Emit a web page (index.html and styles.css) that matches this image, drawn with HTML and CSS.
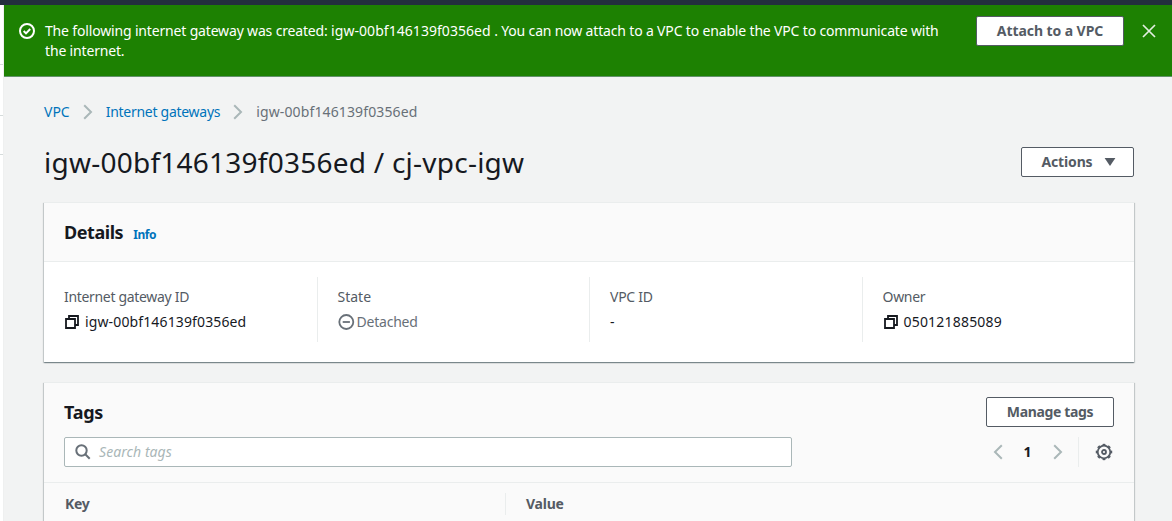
FILE: index.html
```html
<!DOCTYPE html>
<html lang="en">
<head>
<meta charset="utf-8">
<title>Internet gateway details</title>
<link rel="stylesheet" href="styles.css">
</head>
<body>
<div class="topbar"></div>
<div class="shell">
  <aside class="sidebar"><span class="side-a"></span><span class="side-b"></span><span class="side-c"></span></aside>
  <main class="main">
    <div class="flash">
      <svg class="flash-icon" width="16" height="16" viewBox="0 0 16 16"><circle cx="8" cy="8" r="7" /><path d="M4.700 8l2.300 2.400 4.200-4.400" /></svg>
      <p class="flash-text">The following internet gateway was created: <span class="flash-id">igw-00bf146139f0356ed</span> . You can now attach to a VPC to enable the VPC to communicate with<br>the internet.</p>
      <button class="btn btn-attach"><span class="t-attach">Attach to a VPC</span></button>
      <svg class="close" width="14" height="14" viewBox="0 0 14 14"><path d="M1 1l12 12M13 1L1 13" /></svg>
    </div>
    <div class="content">
      <nav class="crumbs">
        <a class="c-vpc">VPC</a>
        <svg class="chev" width="10" height="16" viewBox="0 0 10 16"><path d="M1.200 1.300L8 8l-6.800 6.700" /></svg>
        <a class="c-igw">Internet gateways</a>
        <svg class="chev" width="10" height="16" viewBox="0 0 10 16"><path d="M1.200 1.300L8 8l-6.800 6.700" /></svg>
        <span class="c-current">igw-00bf146139f0356ed</span>
      </nav>
      <header class="page-head">
        <h1>igw-00bf146139f0356ed / cj-vpc-igw</h1>
        <button class="btn btn-actions"><span class="t-actions">Actions</span><svg width="12" height="8" viewBox="0 0 12 8"><path d="M.6 0h10.800L6 8z" /></svg></button>
      </header>
      <section class="panel details">
        <div class="details-head"><h2 class="t-details">Details</h2><a class="info">Info</a></div>
        <div class="cols">
          <div class="col">
            <div class="label t-gid">Internet gateway ID</div>
            <div class="value"><svg class="copy" width="16" height="16" viewBox="0 0 16 16"><path d="M2 5h9v9H2zM5 5V2h9v9h-3" /></svg><span class="t-id">igw-00bf146139f0356ed</span></div>
          </div>
          <div class="col">
            <div class="label">State</div>
            <div class="value muted"><svg class="minus" width="17" height="16" viewBox="0 0 17 16"><circle cx="8.300" cy="8" r="7" /><path d="M4.700 8h7.200" /></svg><span class="t-det">Detached</span></div>
          </div>
          <div class="col">
            <div class="label t-vpcid">VPC ID</div>
            <div class="value"><span class="dash">-</span></div>
          </div>
          <div class="col">
            <div class="label t-owner">Owner</div>
            <div class="value"><svg class="copy" width="16" height="16" viewBox="0 0 16 16"><path d="M2 5h9v9H2zM5 5V2h9v9h-3" /></svg><span class="t-num">050121885089</span></div>
          </div>
        </div>
      </section>
      <section class="panel tags">
        <div class="tags-head">
          <h2 class="t-tags">Tags</h2>
          <button class="btn btn-manage"><span class="t-manage">Manage tags</span></button>
        </div>
        <div class="tools">
          <div class="search">
            <svg width="16" height="16" viewBox="0 0 16 16"><circle cx="6.500" cy="6.500" r="5.200" /><path d="M10.300 10.300l4.400 4.400" /></svg>
            <span class="t-search">Search tags</span>
          </div>
          <div class="pager">
            <svg class="chev" width="10" height="16" viewBox="0 0 10 16"><path d="M8.800 1.300L2 8l6.800 6.700" /></svg>
            <b>1</b>
            <svg class="chev" width="10" height="16" viewBox="0 0 10 16"><path d="M1.200 1.300L8 8l-6.800 6.700" /></svg>
            <i class="sep"></i>
            <svg class="gear" width="18" height="18" viewBox="0 0 18 18"><circle cx="9" cy="9" r="6.300" /><circle class="teeth" cx="9" cy="9" r="7.500" pathLength="80" /><circle cx="9" cy="9" r="2" /></svg>
          </div>
        </div>
        <div class="thead">
          <div class="th th-key"><span class="t-key">Key</span></div>
          <div class="th th-value"><span class="t-value">Value</span></div>
        </div>
      </section>
    </div>
  </main>
</div>
</body>
</html>
```
FILE: styles.css
```css
* { box-sizing: border-box; }
body {
  margin: 0;
  height: 521px;
  overflow: hidden;
  background: #f2f3f3;
  color: #16191f;
  font: 14px/20px "Noto Sans", "Open Sans", sans-serif;
}
h1, h2, p { margin: 0; }
svg { display: block; flex: none; fill: none; }
a { color: #0073bb; }
span, h1, h2, a { white-space: nowrap; }

.topbar { height: 5px; background: #232f3e; }
.shell { display: flex; height: 516px; }
.sidebar { width: 4px; flex: none; background: #fff; border-right: 1px solid #eff0f0; }
.sidebar span { display: block; border-bottom: 1px solid #d5dbdb; }
.side-a { height: 60px; }
.side-b { height: 51px; }
.side-c { height: 39px; }
.main { flex: 1; min-width: 0; }

.flash {
  display: flex;
  align-items: flex-start;
  height: 72px;
  padding: 11px 16px 0 15px;
  background: #1d8102;
  border-bottom: 1px solid #62926a;
  color: #fff;
}
.flash-icon { margin: 7px 10px 0 0; stroke: #fff; stroke-width: 2; }
.flash-text { width: 931px; flex: none; padding-top: 5px; letter-spacing: -0.165px; white-space: nowrap; }
.flash-id { letter-spacing: 0.05px; }
.close { margin: 8px 0 0 18px; stroke: #e2eee0; stroke-width: 1.7; }

.btn {
  display: flex;
  align-items: center;
  justify-content: center;
  height: 30px;
  padding: 0;
  flex: none;
  background: #fff;
  border: 1px solid #545b64;
  border-radius: 2px;
  color: #545b64;
  font: 700 14px/20px "Noto Sans", "Open Sans", sans-serif;
}
.btn-attach { width: 148px; }
.t-attach { letter-spacing: -0.07px; }
.btn-actions { width: 113px; gap: 11px; padding-left: 2px; }
.t-actions { letter-spacing: -0.15px; }
.btn-actions svg { fill: #545b64; }
.btn-manage { width: 128px; }
.t-manage { letter-spacing: -0.36px; }

.content { padding: 0 38px 0 40px; }
.crumbs { display: flex; align-items: center; height: 20px; margin-top: 25px; }
.chev { stroke: #aab7b8; stroke-width: 2; }
.crumbs .chev { margin: 0 13px; }
.c-igw { letter-spacing: -0.28px; }
.c-current { color: #687078; letter-spacing: 0.13px; }
.page-head { display: flex; justify-content: space-between; margin-top: 25px; height: 30px; }
h1 { font-size: 28px; font-weight: 400; line-height: 30px; letter-spacing: 0.24px; }
h2 { font-size: 18px; font-weight: 700; line-height: 22px; }

.panel {
  background: #fff;
  border-top: 1px solid #eaeded;
  box-shadow:
    0 1px 1px 0 rgba(0, 28, 36, 0.3),
    1px 1px 1px 0 rgba(0, 28, 36, 0.15),
    -1px 1px 1px 0 rgba(0, 28, 36, 0.15);
}
.details { margin-top: 25px; height: 160px; }
.details-head {
  display: flex;
  align-items: center;
  gap: 10px;
  height: 59px;
  padding: 0 20px;
  background: #fafafa;
  border-bottom: 1px solid #eaeded;
}
.t-details { letter-spacing: -0.45px; }
.info { font-size: 12px; font-weight: 700; padding-top: 5px; letter-spacing: -0.4px; }
.cols { display: grid; grid-template-columns: repeat(4, 1fr); margin-top: 15px; }
.col { height: 65px; padding: 10px 0 0 20px; border-left: 1px solid #eaeded; }
.col:first-child { border-left: 0; }
.label { color: #545b64; }
.value { display: flex; align-items: center; height: 20px; margin-top: 5px; }
.copy { stroke: #16191f; stroke-width: 1.8; margin-right: 5px; }
.minus { stroke: #687078; stroke-width: 1.8; margin-right: 2px; }
.muted { color: #687078; }
.t-gid { letter-spacing: -0.32px; }
.t-id { letter-spacing: 0.13px; }
.t-det { letter-spacing: -0.22px; }
.t-vpcid { letter-spacing: -0.25px; }
.t-owner { letter-spacing: -0.3px; }
.t-num { letter-spacing: 0.2px; }

.tags { margin-top: 20px; height: 160px; background: #fafafa; }
.tags-head { display: flex; justify-content: space-between; align-items: center; padding: 14px 20px 0; height: 44px; }
.t-tags { letter-spacing: -0.25px; }
.tools { display: flex; justify-content: space-between; margin-top: 10px; padding: 0 20px; height: 45px; }
.search {
  display: flex;
  align-items: center;
  gap: 8px;
  width: 728px;
  height: 30px;
  padding-left: 10px;
  background: #fff;
  border: 1px solid #aab7b8;
  border-radius: 2px;
  color: #aab7b8;
  font-style: italic;
}
.t-search { letter-spacing: 0.07px; }
.search svg { stroke: #687078; stroke-width: 2; }
.pager { display: flex; align-items: center; height: 30px; padding-right: 1px; }
.pager b { width: 50px; padding-right: 1px; text-align: center; }
.sep { width: 1px; height: 30px; margin: 0 16px 0 15px; background: #eaeded; }
.gear { stroke: #545b64; stroke-width: 1.800; }
.teeth { stroke-width: 1.500; stroke-dasharray: 5 5; stroke-dashoffset: 2.5; }
.thead { display: flex; align-items: center; height: 43px; border-top: 1px solid #eaeded; color: #545b64; font-weight: 700; }
.th { height: 22px; line-height: 22px; }
.th-key { width: 461px; padding-left: 21px; }
.th-value { padding-left: 20px; border-left: 1px solid #eaeded; }
.t-key, .t-value { letter-spacing: -0.25px; }
```
